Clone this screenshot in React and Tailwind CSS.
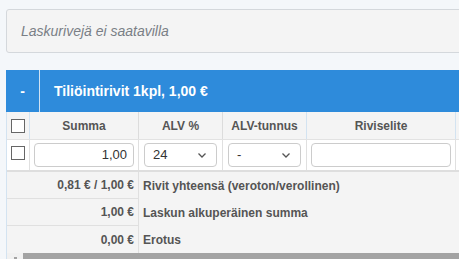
import React from 'react';

const Chevron = () => (
    <svg width="12" height="12" viewBox="0 0 12 12" className="text-[#555]">
        <path d="M2.5 4.5 L6 8 L9.5 4.5" fill="none" stroke="currentColor" strokeWidth="1.3" />
    </svg>
);

const Select = ({ value }) => (
    <div className="mx-[5px] h-[24px] flex items-center justify-between px-[8px] bg-white border border-[#ccc] rounded-[4px] text-[13px] text-[#333]">
        <span>{value}</span>
        <Chevron />
    </div>
);

const App = () => {
    return (
        <div className="w-[459px] h-[259px] overflow-hidden bg-[#f4f7fa] font-['Liberation_Sans',Arial,sans-serif]">
            <div className="w-[620px] pl-[6px] pt-[9px]">
                {/* Empty state */}
                <div className="h-[44px] flex items-center px-[14px] bg-[#f4f4f4] border border-[#d4d8dc] rounded-[3px]">
                    <span className="italic text-[14px] text-[#7a7f86]">Laskurivejä ei saatavilla</span>
                </div>

                {/* Header bar */}
                <div className="mt-[17px] h-[42px] flex bg-[#2e8bdb] text-white font-bold text-[14px]">
                    <div className="w-[34px] flex items-center justify-center border-r border-[#cfe2f3]">-</div>
                    <div className="flex items-center pl-[14px]">Tiliöintirivit 1kpl, 1,00 €</div>
                </div>

                {/* Table */}
                <div className="border-l border-[#d3e3f1] bg-[#f4f4f4]">
                    <div className="flex h-[28px] bg-[#f4f4f4] text-[12px] font-bold text-[#555] border-b border-[#e2e2e2]">
                        <div className="w-[23px] flex items-center justify-center border-r border-[#d3e3f1]">
                            <div className="w-[14px] h-[14px] border border-[#666] bg-white" />
                        </div>
                        <div className="w-[109px] flex items-center justify-center border-r border-[#dcdcdc]">Summa</div>
                        <div className="w-[84px] flex items-center justify-center border-r border-[#dcdcdc]">ALV %</div>
                        <div className="w-[84px] flex items-center justify-center border-r border-[#d3e3f1]">ALV-tunnus</div>
                        <div className="w-[149px] flex items-center justify-center border-r border-[#d3e3f1]">Riviselite</div>
                        <div className="flex-1" />
                    </div>
                    <div className="flex h-[32px] bg-white border-b-2 border-[#dedede]">
                        <div className="w-[23px] flex items-start justify-center pt-[6px] border-r border-[#e0e0e0]">
                            <div className="w-[14px] h-[14px] border border-[#666] bg-white" />
                        </div>
                        <div className="w-[109px] flex items-center border-r border-[#e0e0e0]">
                            <div className="mx-[4px] flex-1 h-[24px] flex items-center justify-end pr-[6px] border border-[#ccc] rounded-[4px] text-[13px] text-[#333]">1,00</div>
                        </div>
                        <div className="w-[84px] flex flex-col justify-center border-r border-[#e0e0e0]">
                            <Select value="24" />
                        </div>
                        <div className="w-[84px] flex flex-col justify-center border-r border-[#e0e0e0]">
                            <Select value="-" />
                        </div>
                        <div className="w-[149px] flex items-center border-r border-[#e0e0e0]">
                            <div className="mx-[4px] flex-1 h-[24px] border border-[#ccc] rounded-[4px]" />
                        </div>
                        <div className="flex-1" />
                    </div>

                    {/* Totals */}
                    {[
                        ['0,81 € / 1,00 €', 'Rivit yhteensä (veroton/verollinen)'],
                        ['1,00 €', 'Laskun alkuperäinen summa'],
                        ['0,00 €', 'Erotus'],
                    ].map(([amount, label], i) => (
                        <div key={i} className="flex h-[27px] text-[12px] font-bold text-[#555]">
                            <div className={`w-[132px] flex items-center justify-end pr-[4px] border-r border-[#e0e0e0] ${i < 2 ? 'border-b' : ''}`}>
                                {amount}
                            </div>
                            <div className="flex items-center pl-[4px]">{label}</div>
                        </div>
                    ))}

                    {/* Horizontal scrollbar */}
                    <div className="flex h-[6px]">
                        <div className="w-[16px] bg-[#f1f1f1] flex justify-center items-end">
                            <div className="w-[3px] h-[2px] bg-[#a3a3a3]" />
                        </div>
                        <div className="flex-1 bg-[#a3a3a3]" />
                    </div>
                </div>
            </div>
        </div>
    );
};

export default App;
